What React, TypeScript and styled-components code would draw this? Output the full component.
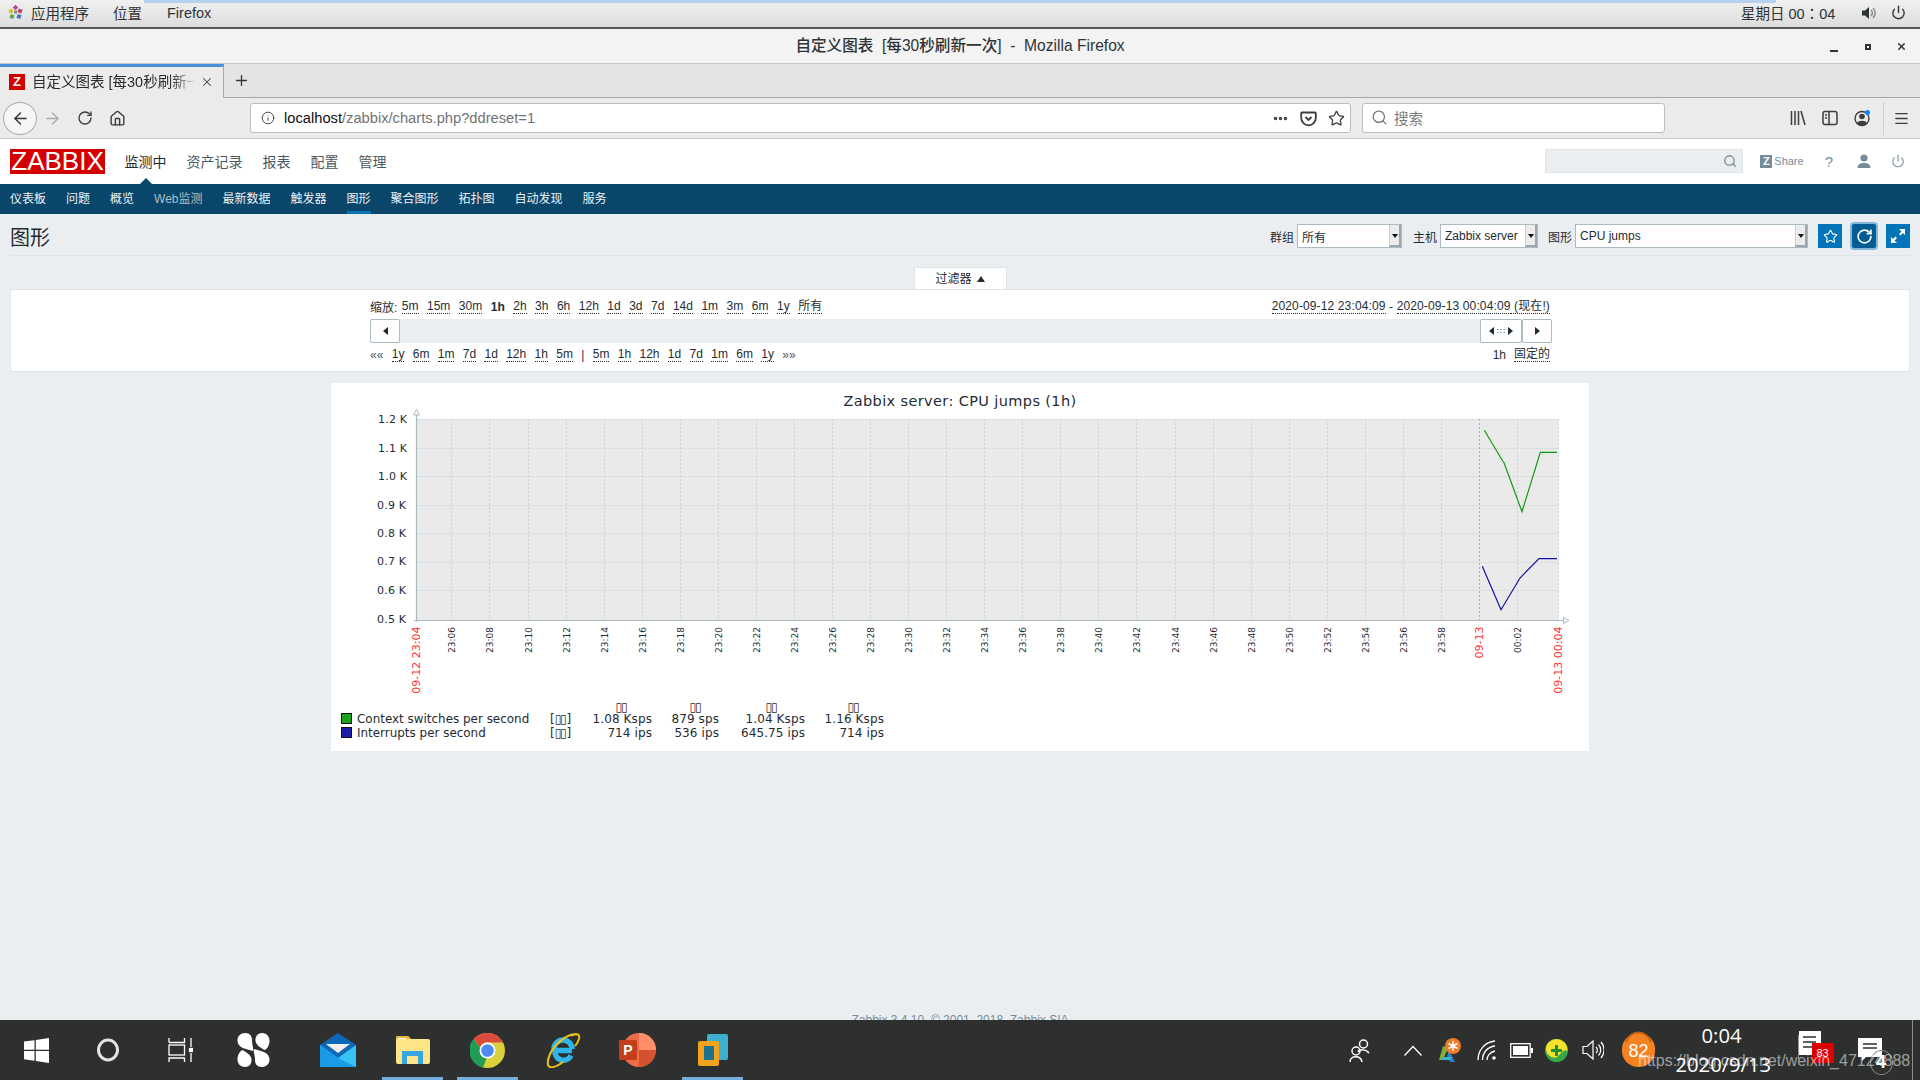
import React from 'react';
import styled, { createGlobalStyle } from 'styled-components';
import { ArrowLeft, ArrowRight, RotateCw, House, Info, Star, Search, Menu, Power, X, Plus, Ellipsis } from 'lucide-react';

const SANS = `"Liberation Sans", "Noto Sans CJK SC", sans-serif`;
const CHART = `"DejaVu Sans", "Noto Sans CJK SC", sans-serif`;

const Global = createGlobalStyle`
  html, body { margin: 0; padding: 0; background: #ebeef0; }
  * { box-sizing: border-box; }
`;

const Screen = styled.div`
  width: 1920px; height: 1080px; overflow: hidden; position: relative;
  display: flex; flex-direction: column; font-family: ${SANS}; color: #1f2c33; background: #ebeef0;
`;

/* GNOME panel */
const GnomeBar = styled.div`
  height: 29px; flex: none; position: relative; display: flex; align-items: center; padding: 0 14px 3px 8px;
  background: linear-gradient(#f0f0f0, #dcdcdc); border-bottom: 1px solid #5a5a5a; box-shadow: inset 0 -1px 0 #5a5a5a;
  font-size: 14.5px; color: #2e3436;
`;
const ActivityStrip = styled.div`
  position: absolute; left: 144px; top: 0; width: 1632px; height: 3px; background: #b7d0ee;
`;
const GnomeItem = styled.span<{ $ml: number }>`
  margin-left: ${p => p.$ml}px;
`;
const GnomeRight = styled.div`
  margin-left: auto; display: flex; align-items: center;
`;
const GnomeClock = styled.span`
  width: 120px; font-family: "Liberation Sans", "Noto Sans CJK TC", sans-serif; font-size: 14.5px; white-space: pre;
`;
const PanelPower = styled.span`
  display: flex; margin-left: 14px;
`;

/* Window title */
const TitleBar = styled.div`
  height: 35px; flex: none; position: relative; display: flex; align-items: center; justify-content: center; padding-bottom: 5px;
  background: #f3f3f3; border-bottom: 1px solid #c6c6c6; font-size: 15.6px; font-weight: 500; color: #2e3436; white-space: pre;
`;
const WinControls = styled.div`
  position: absolute; right: 13px; top: 12px; display: flex; align-items: center; gap: 0;
`;
const WinMin = styled.span`
  width: 8px; height: 2px; background: #2e3436; margin-top: 9px;
`;
const WinMax = styled.span`
  width: 6px; height: 6px; border: 2px solid #2e3436; margin-left: 27px;
`;
const WinClose = styled.span`
  display: flex; margin-left: 25px;
`;

/* Tabs */
const TabStrip = styled.div`
  height: 34px; flex: none; display: flex; background: #e4e4e3; border-bottom: 1px solid #a8a8a8;
`;
const Tab = styled.div`
  width: 224px; height: 34px; background: #ebebea; border-top: 3px solid #4a90d9; border-right: 1px solid #a8a8a8;
  display: flex; align-items: center; padding: 0 0 1px 9px; font-size: 14.5px; color: #2b2b2b;
`;
const Favicon = styled.span`
  width: 16px; height: 16px; flex: none; background: #d40000; color: #fff; font: bold 13px/16px ${SANS}; text-align: center;
`;
const TabLabel = styled.span`
  margin: -3px 0 0 7px; width: 164px; overflow: hidden; white-space: nowrap;
  -webkit-mask-image: linear-gradient(90deg, #000 85%, transparent);
  mask-image: linear-gradient(90deg, #000 85%, transparent);
`;
const TabClose = styled.span`
  display: flex; margin-left: 4px; color: #444;
`;
const NewTab = styled.span`
  display: flex; margin: 8px 0 0 9px; height: 16px; color: #333;
`;

/* Nav toolbar */
const NavBar = styled.div`
  height: 41px; flex: none; display: flex; align-items: center; background: #ebebea; border-bottom: 1px solid #c8c8c8; padding-left: 3px; color: #3d3d3d;
`;
const BackBtn = styled.span`
  width: 34px; height: 33px; flex: none; border-radius: 50%; border: 1px solid #a9a9a9; background: #f6f6f6;
  display: flex; align-items: center; justify-content: center; color: #333;
`;
const NavIcon = styled.span<{ $ml: number; $c?: string }>`
  display: flex; margin-left: ${p => p.$ml}px; color: ${p => p.$c || '#3d3d3d'};
`;
const UrlBox = styled.div`
  width: 1101px; height: 30px; margin-left: 124px; flex: none; background: #fff; border: 1px solid #bdbdbd; border-radius: 3px;
  display: flex; align-items: center; padding-left: 10px; font-size: 14.7px; color: #737373;
`;
const UrlText = styled.span`
  margin-left: 9px;
`;
const UrlHost = styled.span`
  color: #111;
`;
const UrlActions = styled.span`
  margin-left: auto; display: flex; align-items: center; padding-right: 5px; color: #3d3d3d;
`;
const SearchBox = styled.div`
  width: 303px; height: 30px; margin-left: 11px; flex: none; background: #fff; border: 1px solid #bdbdbd; border-radius: 3px;
  display: flex; align-items: center; padding: 0 0 2px 8px; font-size: 14.5px; color: #7a7a7a; gap: 6px;
`;
const Separator = styled.span`
  width: 1px; height: 33px; background: #cfcfcf; margin-left: 11px;
`;

/* Zabbix header */
const ZHeader = styled.div`
  height: 45px; flex: none; background: #fff; display: flex; align-items: center; padding-left: 10px;
`;
const Logo = styled.div`
  width: 95px; height: 25px; background: #d40000; color: #fff; font-size: 26px; line-height: 25px; text-align: center;
`;
const MainMenu = styled.nav`
  display: flex; gap: 20px; margin: -2px 0 0 19.5px; font-size: 14px; color: #4a5a63;
`;
const MainItem = styled.span<{ $active?: boolean }>`
  position: relative; color: ${p => (p.$active ? '#1f2c33' : '#4a5a63')};
  ${p => p.$active && `&::after { content: ''; position: absolute; left: 14px; top: 27px; border: 7px solid transparent; border-top: 0; border-bottom-color: #0a466a; }`}
`;
const ZHeaderRight = styled.div`
  margin-left: auto; display: flex; align-items: center; color: #768d99; padding-bottom: 1px;
`;
const ZSearch = styled.div`
  width: 198px; height: 24px; background: #ebeef0; border: 1px solid #dfe4e7; display: flex; align-items: center; justify-content: flex-end; padding-right: 5px;
`;
const ShareLink = styled.span`
  display: flex; align-items: center; margin-left: 17px; font-size: 11px; gap: 2px;
`;
const ZBadge = styled.span`
  width: 12px; height: 13px; background: #768d99; color: #fff; font: bold 11px/13px ${SANS}; text-align: center;
`;
const ZIconSlot = styled.span<{ $ml: number }>`
  display: flex; margin-left: ${p => p.$ml}px; font-size: 15px; color: #768d99;
`;

/* Sub nav */
const SubNav = styled.nav`
  height: 30px; flex: none; background: #0a466a; display: flex; gap: 20px; padding-left: 10px; font-size: 12px; color: #f2f2f2;
`;
const SubItem = styled.span<{ $active?: boolean; $dim?: boolean }>`
  line-height: 30px; white-space: nowrap; color: ${p => (p.$dim ? '#a9c0cd' : '#eef2f4')};
  ${p => p.$active && `box-shadow: inset 0 -3px 0 #0275b8;`}
`;

/* Content */
const Content = styled.main`
  flex: 1; min-height: 0; overflow: hidden; display: flex; flex-direction: column; align-items: stretch;
`;
const TitleRow = styled.div`
  height: 42px; flex: none; margin: 0 10px; border-bottom: 1px solid #dfe4e7; display: flex; align-items: center; padding-top: 3px;
`;
const PageTitle = styled.h1`
  margin: 0; font-size: 20px; font-weight: normal; color: #1f2c33;
`;
const Controls = styled.div`
  margin-left: auto; display: flex; align-items: center; font-size: 12px;
`;
const CtlLabel = styled.span<{ $ml: number }>`
  margin-left: ${p => p.$ml}px; margin-right: 3px;
`;
const SelectBox = styled.div<{ $w: number }>`
  width: ${p => p.$w}px; height: 24px; background: #fff; border: 1px solid #acbbc2; display: flex; align-items: center; padding-left: 4px; font-size: 12px; position: relative;
`;
const SelectArrow = styled.span`
  position: absolute; right: 0; top: 0; bottom: 0; width: 12px; background: #ececec; border-right: 2px solid #9aa7ae; border-bottom: 2px solid #9aa7ae; border-left: 1px solid #d0d0d0;
  &::after { content: ''; position: absolute; left: 2px; top: 9px; border: 3.5px solid transparent; border-bottom: 0; border-top: 4px solid #111; }
`;
const IconBtn = styled.span<{ $ml: number; $focus?: boolean }>`
  width: 24px; height: 24px; margin-left: ${p => p.$ml}px; display: flex; align-items: center; justify-content: center; color: #fff;
  background: ${p => (p.$focus ? '#005c93' : '#0275b8')};
  ${p => p.$focus && `box-shadow: 0 0 0 2px #83b8d8; border-radius: 2px;`}
`;

const FilterTabRow = styled.div`
  flex: none; display: flex; justify-content: center; margin-top: 11px; height: 23px;
`;
const FilterTab = styled.div`
  width: 93px; background: #fff; font-size: 12px; display: flex; align-items: center; justify-content: center; gap: 5px; padding-bottom: 3px; border: 1px solid #dfe4e7; border-bottom: 0;
`;
const Up = styled.span`
  border: 4px solid transparent; border-top: 0; border-bottom: 6px solid #1f2c33; margin-top: 2px;
`;
const FilterBox = styled.section`
  flex: none; height: 83px; margin: -1px 10px 0 10px; background: #fff; border: 1px solid #dfe4e7; padding: 9px 0 0 2px; display: flex; flex-direction: column; align-items: center;
`;
const Period = styled.div`
  width: 1182px; display: flex; flex-direction: column;
`;
const PeriodRow = styled.div<{ $mt?: number }>`
  display: flex; justify-content: space-between; align-items: center; height: 15px; font-size: 12px; margin-top: ${p => p.$mt || 0}px; padding-right: 2px; color: #1f2c33;
`;
const LinkGroup = styled.div<{ $gap: number }>`
  display: flex; gap: ${p => p.$gap}px; align-items: center; white-space: nowrap;
`;
const Plain = styled.span<{ $c?: string }>`
  color: ${p => p.$c || '#1f2c33'}; white-space: pre;
`;
const ZoomLabel = styled.span`
  white-space: pre; margin-right: -4px;
`;
const Lnk = styled.span<{ $bold?: boolean }>`
  border-bottom: 1px dotted #1f2c33; line-height: 14px; white-space: pre; font-weight: ${p => (p.$bold ? 'bold' : 'normal')};
  ${p => p.$bold && `border-bottom: 0;`}
`;
const DateGroup = styled.div`
  display: flex; align-items: center; white-space: pre; letter-spacing: .13px;
`;
const Track = styled.div`
  height: 24px; margin-top: 5px; background: #ebeef0; display: flex; justify-content: space-between;
`;
const TrackEnd = styled.div`
  display: flex;
`;
const SlideBtn = styled.span<{ $w: number }>`
  width: ${p => p.$w}px; height: 24px; background: #fff; border: 1px solid #acbbc2; border-radius: 2px; display: flex; align-items: center; justify-content: center; gap: 2px;
`;
const TriL = styled.span`
  border: 4px solid transparent; border-left: 0; border-right: 5px solid #1f2c33;
`;
const TriR = styled.span`
  border: 4px solid transparent; border-right: 0; border-left: 5px solid #1f2c33;
`;
const Grip = styled.span`
  width: 10px; height: 6px; background-image: radial-gradient(#8a9aa3 0.8px, transparent 1px); background-size: 3.4px 3px;
`;

const ChartCard = styled.div`
  flex: none; width: 1258px; height: 368px; margin: 11px 0 0 331px; background: #fff;
`;
const ChartSvg = styled.svg`
  display: block; width: 1258px; height: 368px; font-family: ${CHART};
`;
const Footer = styled.footer`
  margin-top: auto; margin-bottom: -8px; height: 15px; flex: none; text-align: center; font-size: 12px; color: #768d99;
`;

/* Task bar */
const TaskBar = styled.footer`
  height: 60px; flex: none; background: #2e2f2f; display: flex; align-items: stretch; position: relative; color: #fff;
`;
const Slot = styled.div<{ $w: number; $on?: boolean }>`
  width: ${p => p.$w}px; flex: none; display: flex; align-items: center; justify-content: center; position: relative;
  ${p => p.$on && `box-shadow: inset 0 -3px 0 #76aee0;`}
`;
const AppGroup = styled.div`
  display: flex; gap: 14px; margin-left: 16px;
`;
const Tray = styled.div`
  position: absolute; inset: 0 0 0 auto; display: flex; align-items: center;
`;
const TrayIcon = styled.span<{ $ml: number }>`
  display: flex; margin-left: ${p => p.$ml}px; position: relative;
`;
const Clock = styled.div`
  width: 92px; margin-left: 21px; text-align: center; font-size: 20.2px; line-height: 29px; color: #fff; font-family: "Open Sans", ${SANS}; white-space: nowrap;
`;
const RedBadge = styled.span`
  position: absolute; left: 14px; top: 12px; width: 22px; height: 20px; background: #d00; color: #fff; font-size: 11px; line-height: 20px; text-align: center;
`;
const CountRing = styled.span`
  position: absolute; left: 12px; top: 12px; width: 23px; height: 25px; border: 1px solid #8a8a8a; border-radius: 50%; font-size: 18px; font-weight: bold; line-height: 23px; text-align: center; color: #fff;
`;
const DesktopEdge = styled.span`
  width: 1px; height: 60px; background: #8b8b8b; margin: 0 7px 0 30.5px;
`;
const Watermark = styled.span`
  position: absolute; left: 1638px; top: 30px; font-size: 16px; line-height: 22px; color: rgba(255,255,255,.55); white-space: nowrap;
`;

/* Small drawings */
const GnomeLogo = () => (
  <svg width="15" height="15" viewBox="0 0 15 15">
    <rect x="5.5" y="0.5" width="4" height="4" fill="#b04fa0" transform="rotate(45 7.5 2.5)" />
    <rect x="1" y="4" width="4" height="4" fill="#c9c53c" transform="rotate(20 3 6)" />
    <rect x="10" y="4" width="4" height="4" fill="#c0436a" transform="rotate(20 12 6)" />
    <rect x="2" y="9.5" width="4" height="4" fill="#5ea84a" transform="rotate(20 4 11.5)" />
    <rect x="9" y="9.5" width="4" height="4" fill="#4a6fc0" transform="rotate(20 11 11.5)" />
    <rect x="6" y="5.5" width="3" height="3" fill="#888" />
  </svg>
);
const Speaker = () => (
  <svg width="16" height="16" viewBox="0 0 16 16"><path d="M1 5.5h3L8 2v12L4 10.5H1z" fill="#2e3436" /><path d="M10 5a4 4 0 0 1 0 6M12 3a7 7 0 0 1 0 10" stroke="#888" strokeWidth="1.5" fill="none" /></svg>
);
const Pocket = () => (
  <svg width="17" height="17" viewBox="0 0 17 17" fill="none" stroke="#3d3d3d" strokeWidth="1.8"><path d="M2 2.5h13a.8.8 0 0 1 .8.8V8a7.3 7.3 0 0 1-14.6 0V3.3a.8.8 0 0 1 .8-.8z" /><path d="M5.5 7l3 3 3-3" /></svg>
);
const LibraryIcon = () => (
  <svg width="16" height="16" viewBox="0 0 16 16" stroke="#3d3d3d" strokeWidth="1.5" fill="none"><path d="M1.5 1v14M5 1v14M8.5 1v14M11 1l4 14" /></svg>
);
const SidebarIcon = () => (
  <svg width="16" height="16" viewBox="0 0 16 16" stroke="#3d3d3d" strokeWidth="1.5" fill="none"><rect x="1" y="1.5" width="14" height="13" rx="2" /><path d="M7 1.5v13" /><path d="M3 5h2M3 8h2" /></svg>
);
const AccountIcon = () => (
  <svg width="18" height="18" viewBox="0 0 18 18"><circle cx="8" cy="9.5" r="7" fill="none" stroke="#3d3d3d" strokeWidth="1.4" /><circle cx="8" cy="7.5" r="2.8" fill="#3d3d3d" /><path d="M3 14c1-3 9-3 10 0l-2 2H5z" fill="#3d3d3d" /><circle cx="13.5" cy="3.5" r="2.5" fill="#0a84ff" /></svg>
);
const ZUser = () => (
  <svg width="14" height="15" viewBox="0 0 14 15" fill="#768d99"><circle cx="7" cy="4" r="3.6" /><path d="M0.5 14c0-4 3-5 6.5-5s6.5 1 6.5 5z" /></svg>
);
const StarOutline = () => <Star size={15} strokeWidth={1.8} color="#fff" />;
const Refresh = () => <RotateCw size={17} strokeWidth={2.4} color="#fff" />;
const Expand = () => (
  <svg width="16" height="16" viewBox="0 0 16 16" fill="#fff"><path d="M9 1h6v6l-2-2-2.5 2.5-1.5-1.5L11.5 3.5z" /><path d="M7 15H1V9l2 2 2.5-2.5L7 10l-2.5 2.5z" /></svg>
);

const WinLogo = () => (
  <svg width="25" height="25" viewBox="0 0 25 25" fill="#fff"><path d="M0 3.6l10.5-1.4v9.6H0zM11.8 2L25 0v11.8H11.8zM0 13h10.5v9.7L0 21.3zM11.8 13H25v12l-13.2-1.9z" /></svg>
);
const Cortana = () => (
  <svg width="24" height="24" viewBox="0 0 24 24"><ellipse cx="12" cy="12" rx="9.5" ry="10" fill="none" stroke="#e4e4e4" strokeWidth="3" /></svg>
);
const TaskView = () => (
  <svg width="25" height="24" viewBox="0 0 25 24" fill="none" stroke="#fff" strokeWidth="1.3"><path d="M1 4.5h15.5V0M1 4.5V0M16.5 24v-4H1v4" /><rect x="1" y="7" width="15.5" height="10" /><path d="M23 0v9M23 15v9" /><rect x="21.5" y="10.5" width="3" height="3" fill="#fff" /></svg>
);
const Swirl = () => (
  <svg width="33" height="34" viewBox="0 0 33 34" fill="#fff">
    <path d="M8 0c5 0 7 3 7 7 0 5 2 9 1 11C9 16 1 15 .5 8 0 3 4 0 8 0z" />
    <path d="M25 0c5 0 8 4 7.5 9-.5 4-2.5 7-5 8-3-2-8-4-9-9C18 3 21 0 25 0z" />
    <path d="M5.5 17c3 2 8 4 9 9 .5 5-2.5 8-6.5 8-5 0-8-4-7.5-9 .5-4 2.5-7 5-8z" />
    <path d="M17 16c7 2 15 3 15.5 10 .5 5-3.5 8-7.5 8-5 0-7-3-7-7 0-5-2-9-1-11z" />
  </svg>
);
const Mail = () => (
  <svg width="36" height="34" viewBox="0 0 36 34"><path d="M0 12L18 0l18 12v22H0z" fill="#0f67b8" /><path d="M6 11h24l-12 9z" fill="#f1f1f1" /><path d="M0 12l18 13 18-13v22H0z" fill="#36c2f3" /><path d="M0 34V12l18 13 18 9z" fill="#1a9be6" /></svg>
);
const Folder = () => (
  <svg width="34" height="28" viewBox="0 0 34 28"><path d="M0 2a2 2 0 0 1 2-2h10l3 3h17a2 2 0 0 1 2 2v21a2 2 0 0 1-2 2H2a2 2 0 0 1-2-2z" fill="#ffe58a" /><path d="M0 2a2 2 0 0 1 2-2h10l3 3H0z" fill="#e8b73a" /><rect x="2" y="2" width="8" height="1" fill="#fff" /><path d="M6 28V15h21v13h-5v-8H11v8z" fill="#37a6e0" /></svg>
);
const Chrome = () => (
  <svg width="35" height="35" viewBox="0 0 35 35"><circle cx="17.5" cy="17.5" r="17.5" fill="#d9d03a" /><path d="M17.5 0A17.5 17.5 0 0 1 33 9.5H17.5a8 8 0 0 0-7.5 5L3.5 6A17.5 17.5 0 0 1 17.5 0z" fill="#db4a3d" /><path d="M3.5 6l7 9.5a8 8 0 0 0 6 10L13 34.5A17.5 17.5 0 0 1 3.5 6z" fill="#1f9d55" /><circle cx="17.5" cy="17.5" r="8" fill="#fff" /><circle cx="17.5" cy="17.5" r="6.3" fill="#4b8bf0" /></svg>
);
const IE = () => (
  <svg width="36" height="36" viewBox="0 0 36 36" fill="none"><path d="M27 18.5H10a8.5 8.5 0 0 0 16 5" stroke="#2fb5e8" strokeWidth="5.5" /><path d="M9 17a9 9 0 0 1 18 0" stroke="#2fb5e8" strokeWidth="5.5" /><path d="M32 3C27 0 12 8 5 22c-3 7-3 12 0 13 4 1 9-2 13-5M26 4c5-3 9-3 8 3-1 3-2 5-4 7" stroke="#eac11c" strokeWidth="2" /></svg>
);
const Ppt = () => (
  <svg width="37" height="36" viewBox="0 0 37 36"><circle cx="20" cy="18" r="17" fill="#ed6c47" /><path d="M20 1a17 17 0 0 1 17 17H20z" fill="#ff8f6b" /><path d="M20 18h17a17 17 0 0 1-17 17z" fill="#d35230" /><rect x="0" y="8" width="18" height="20" rx="1" fill="#c43e1c" /><text x="9" y="23" textAnchor="middle" fontSize="14" fontWeight="bold" fill="#fff" fontFamily={SANS}>P</text></svg>
);
const VMware = () => (
  <svg width="32" height="34" viewBox="0 0 32 34"><rect x="10" y="1" width="21" height="26" rx="2" fill="#3eafd0" /><rect x="1" y="8" width="21" height="25" rx="2" fill="#f2a31e" /><rect x="7" y="13" width="10" height="14" fill="#1f6f8f" /></svg>
);
const People = () => (
  <svg width="21" height="24" viewBox="0 0 21 24" fill="none" stroke="#fff" strokeWidth="1.5"><circle cx="14.5" cy="6" r="4" /><path d="M9 14c1-3 8-3 11 1" /><circle cx="7" cy="13" r="4" /><path d="M1 24c0-7 11-7 12 0" /></svg>
);
const Caret = () => (
  <svg width="18" height="11" viewBox="0 0 18 11" fill="none" stroke="#fff" strokeWidth="1.3"><path d="M.5 10.5L9 1.5l8.5 9" /></svg>
);
const ColorTray = () => (
  <svg width="22" height="24" viewBox="0 0 22 24"><path d="M4 8l5 2-5 12H0z" fill="#7fb03a" /><path d="M10 12l6 12h-5l-3-6z" fill="#2d7fd0" /><path d="M2 22h9l2-3H4z" fill="#35b8c8" /><circle cx="14" cy="8" r="8" fill="#ef7b2b" /><path d="M14 3v10M9.5 5.5l9 5M18.5 5.5l-9 5" stroke="#fff" strokeWidth="1.5" /></svg>
);
const WifiTray = () => (
  <svg width="19" height="20" viewBox="0 0 19 20" fill="none" stroke="#fff" strokeWidth="1.3"><path d="M1 20C1 10 8 2 18 1" /><path d="M5.5 20C5.5 13 10 7 18 6" /><path d="M10 20c0-4 3-8 8-9" /><circle cx="17" cy="18" r="1.8" fill="#fff" stroke="none" /></svg>
);
const Battery = () => (
  <svg width="23" height="15" viewBox="0 0 23 15"><rect x=".7" y=".7" width="19.5" height="13.6" fill="none" stroke="#fff" strokeWidth="1.3" /><rect x="3" y="3" width="15" height="9" fill="#fff" /><rect x="21" y="5" width="2" height="5" fill="#fff" /></svg>
);
const GreenTray = () => (
  <svg width="23" height="23" viewBox="0 0 23 23"><circle cx="11.5" cy="11.5" r="11.5" fill="#35a84a" /><path d="M4 3a11 11 0 0 1 15 0c3 3 4 7 3 9-3-3-6 3-10 6-4 2-8-1-10-4C0 10 1 6 4 3z" fill="#f7e22b" /><path d="M11.5 6v11M6 11.5h11" stroke="#18913a" strokeWidth="3" /></svg>
);
const VolumeTray = () => (
  <svg width="22" height="20" viewBox="0 0 22 20" fill="none" stroke="#fff" strokeWidth="1.2"><path d="M1 6.5h4L11 1v18l-6-5.500H1z" /><path d="M14 7a4 4 0 0 1 0 6M16.5 4.500a8 8 0 0 1 0 11M19 2a12 12 0 0 1 0 16" /></svg>
);
const OrangeBadge = () => (
  <svg width="33" height="38" viewBox="0 0 33 38"><rect x="0" y="2" width="33" height="34" rx="16" fill="#f58220" /><path d="M4 11a13 13 0 0 1 25 0" fill="none" stroke="#c56010" strokeWidth="2" /><text x="16.5" y="26" textAnchor="middle" fontSize="18" fill="#fff" fontFamily={SANS}>82</text></svg>
);
const DocIcon = () => (
  <svg width="23" height="38" viewBox="0 0 23 38"><rect x="1" y="0" width="22" height="24" fill="#fff" /><path d="M0 4v24" stroke="#fff" /><path d="M5 6h13M5 11h13M5 16h9" stroke="#2e2f2f" strokeWidth="1.5" /></svg>
);
const ActionIcon = () => (
  <svg width="24" height="24" viewBox="0 0 24 24"><path d="M0 0h24v19H8l-4 4v-4H0z" fill="#fff" /><path d="M5 6h14M5 10h14" stroke="#2e2f2f" strokeWidth="1.3" /></svg>
);

/* Chart data */
const PX = 416.5, PY0 = 419, PY1 = 620, PR = 1558.5;
const hLines = [419, 448, 476, 505, 533, 562, 590];
const yLabels = [
  ['1.2 K', 378, 418.5], ['1.1 K', 378, 447.5], ['1.0 K', 378, 476], ['0.9 K', 377, 504.5],
  ['0.8 K', 377, 533], ['0.7 K', 377, 561], ['0.6 K', 377, 590], ['0.5 K', 377, 619],
] as const;
const minuteLabels: { t: string; x: number }[] = [];
for (let m = 6; m <= 58; m += 2) {
  minuteLabels.push({ t: `23:${String(m).padStart(2, '0')}`, x: Math.floor(416.7 + (m - 4.15) * 19.03) + 0.5 });
}
const legendRows = [
  { name: 'Context switches per second', color: '#1aa31a', y: 713, vals: ['1.08 Ksps', '879 sps', '1.04 Ksps', '1.16 Ksps'] },
  { name: 'Interrupts per second', color: '#1c1ca6', y: 727, vals: ['714 ips', '536 ips', '645.75 ips', '714 ips'] },
];
const colRight = [652, 719, 805, 884];
const headers = [621, 695, 771, 853];

const Graph = () => (
  <ChartSvg viewBox="331 383 1258 368">
    <text x="960" y="406" textAnchor="middle" fontSize="14.5" fill="#1f2c33" letterSpacing=".38">Zabbix server: CPU jumps (1h)</text>
    <rect x={PX} y={PY0} width={PR - PX} height={PY1 - PY0} fill="#eaeaea" />
    {hLines.map(y => <line key={y} x1={PX} x2={PR} y1={y + 0.5} y2={y + 0.5} stroke="#c9d3da" strokeDasharray="2 2" />)}
    {minuteLabels.map(l => <line key={l.t} x1={l.x} x2={l.x} y1={PY0} y2={PY1} stroke="#c9d3da" strokeDasharray="2 2" />)}
    <line x1="1479.5" x2="1479.5" y1={PY0} y2={PY1} stroke="#a9b4ba" strokeDasharray="2 2" />
    <line x1="1517.5" x2="1517.5" y1={PY0} y2={PY1} stroke="#c9d3da" strokeDasharray="2 2" />
    <line x1={PR} x2={PR} y1={PY0} y2={PY1} stroke="#c9d3da" strokeDasharray="2 2" />
    <line x1={PX} x2={PX} y1="412" y2="622" stroke="#acbbc2" strokeWidth="1.2" />
    <line x1="414" x2="1563" y1="620.5" y2="620.5" stroke="#acbbc2" strokeWidth="1.2" />
    <path d="M416.5 409.5l3 5.5h-6z" fill="#fff" stroke="#acbbc2" />
    <path d="M1569 620.5l-5.5 3v-6z" fill="#fff" stroke="#acbbc2" />
    <polyline points="1484.3,430.3 1502.7,461 1504,462.7 1522,511.7 1540.3,452.3 1557,452.3" fill="none" stroke="#0f9a0f" strokeWidth="1.2" />
    <polyline points="1482.3,566.3 1501,609.7 1520,578 1539,558.7 1557,558.7" fill="none" stroke="#1212a0" strokeWidth="1.2" />
    {yLabels.map(([t, x, y]) => <text key={t} x={x} y={y + 4} fontSize="11" letterSpacing=".2" fill="#1f2c33">{t}</text>)}
    {minuteLabels.map(l => (
      <text key={l.t} x={l.x + 3.5} y="627" fontSize="9" fill="#1f2c33" textAnchor="end" transform={`rotate(-90 ${l.x + 3.5} 627)`}>{l.t}</text>
    ))}
    <text x="1521" y="627" fontSize="9" fill="#1f2c33" textAnchor="end" transform="rotate(-90 1521 627)">00:02</text>
    <text x="420" y="626.5" fontSize="11" fill="#f33" textAnchor="end" transform="rotate(-90 420 626.5)">09-12 23:04</text>
    <text x="1483" y="626.5" fontSize="11" fill="#f33" textAnchor="end" transform="rotate(-90 1483 626.5)">09-13</text>
    <text x="1561.5" y="626.5" fontSize="11" fill="#f33" textAnchor="end" transform="rotate(-90 1561.5 626.5)">09-13 00:04</text>
    {headers.map(x => <text key={x} x={x} y="710.5" fontSize="12" fill="#1f2c33" textAnchor="middle" letterSpacing="-1.2">▯▯</text>)}
    {legendRows.map(r => (
      <g key={r.name}>
        <rect x="341.5" y={r.y + 0.5} width="10" height="10" fill={r.color} stroke="#111" />
        <text x="357" y={r.y + 10} fontSize="11.95" fill="#1f2c33">{r.name}</text>
        <text x="550" y={r.y + 10} fontSize="12" fill="#1f2c33">[<tspan letterSpacing="-1.2">▯▯</tspan><tspan dx="1">]</tspan></text>
        {r.vals.map((v, i) => <text key={i} x={colRight[i]} y={r.y + 10} fontSize="12" letterSpacing=".1" fill="#1f2c33" textAnchor="end">{v}</text>)}
      </g>
    ))}
  </ChartSvg>
);

const zoomLinks = ['5m', '15m', '30m', '1h', '2h', '3h', '6h', '12h', '1d', '3d', '7d', '14d', '1m', '3m', '6m', '1y', '所有'];
const backLinks = ['1y', '6m', '1m', '7d', '1d', '12h', '1h', '5m'];
const fwdLinks = ['5m', '1h', '12h', '1d', '7d', '1m', '6m', '1y'];
const subItems = ['仪表板', '问题', '概览', 'Web监测', '最新数据', '触发器', '图形', '聚合图形', '拓扑图', '自动发现', '服务'];

export default function App() {
  return (
    <Screen>
      <Global />
      <GnomeBar>
        <ActivityStrip />
        <GnomeLogo />
        <GnomeItem $ml={8}>应用程序</GnomeItem>
        <GnomeItem $ml={24}>位置</GnomeItem>
        <GnomeItem $ml={25}>Firefox</GnomeItem>
        <GnomeRight>
          <GnomeClock>星期日 00：04</GnomeClock>
          <Speaker />
          <PanelPower><Power size={15} strokeWidth={2.2} color="#2e3436" /></PanelPower>
        </GnomeRight>
      </GnomeBar>
      <TitleBar>
        自定义图表  [每30秒刷新一次]  -  Mozilla Firefox
        <WinControls>
          <WinMin />
          <WinMax />
          <WinClose><X size={11} strokeWidth={3.2} color="#2e3436" /></WinClose>
        </WinControls>
      </TitleBar>
      <TabStrip>
        <Tab>
          <Favicon>Z</Favicon>
          <TabLabel>自定义图表 [每30秒刷新一次]</TabLabel>
          <TabClose><X size={14} strokeWidth={1.8} /></TabClose>
        </Tab>
        <NewTab><Plus size={17} strokeWidth={1.8} /></NewTab>
      </TabStrip>
      <NavBar>
        <BackBtn><ArrowLeft size={19} strokeWidth={1.8} /></BackBtn>
        <NavIcon $ml={6} $c="#adadad"><ArrowRight size={19} strokeWidth={1.8} /></NavIcon>
        <NavIcon $ml={15}><RotateCw size={16} strokeWidth={2} /></NavIcon>
        <NavIcon $ml={16}><House size={17} strokeWidth={2} /></NavIcon>
        <UrlBox>
          <Info size={14} strokeWidth={1.6} color="#444" />
          <UrlText><UrlHost>localhost</UrlHost>/zabbix/charts.php?ddreset=1</UrlText>
          <UrlActions>
            <Ellipsis size={17} strokeWidth={3} />
            <NavIcon $ml={11}><Pocket /></NavIcon>
            <NavIcon $ml={11}><Star size={17} strokeWidth={1.8} /></NavIcon>
          </UrlActions>
        </UrlBox>
        <SearchBox><Search size={17} strokeWidth={1.8} color="#777" />搜索</SearchBox>
        <NavIcon $ml={125}><LibraryIcon /></NavIcon>
        <NavIcon $ml={16}><SidebarIcon /></NavIcon>
        <NavIcon $ml={16}><AccountIcon /></NavIcon>
        <Separator />
        <NavIcon $ml={9}><Menu size={17} strokeWidth={1.8} /></NavIcon>
      </NavBar>
      <ZHeader>
        <Logo>ZABBIX</Logo>
        <MainMenu>
          <MainItem $active>监测中</MainItem>
          <MainItem>资产记录</MainItem>
          <MainItem>报表</MainItem>
          <MainItem>配置</MainItem>
          <MainItem>管理</MainItem>
        </MainMenu>
        <ZHeaderRight>
          <ZSearch><Search size={14} strokeWidth={2.2} color="#768d99" /></ZSearch>
          <ShareLink><ZBadge>Z</ZBadge>Share</ShareLink>
          <ZIconSlot $ml={21}>?</ZIconSlot>
          <ZIconSlot $ml={24}><ZUser /></ZIconSlot>
          <ZIconSlot $ml={20}><Power size={14} strokeWidth={1.8} /></ZIconSlot>
          <ZIconSlot $ml={15} />
        </ZHeaderRight>
      </ZHeader>
      <SubNav>
        {subItems.map(s => <SubItem key={s} $active={s === '图形'} $dim={s === 'Web监测'}>{s}</SubItem>)}
      </SubNav>
      <Content>
        <TitleRow>
          <PageTitle>图形</PageTitle>
          <Controls>
            <CtlLabel $ml={0}>群组</CtlLabel>
            <SelectBox $w={105}>所有<SelectArrow /></SelectBox>
            <CtlLabel $ml={11}>主机</CtlLabel>
            <SelectBox $w={98}>Zabbix server<SelectArrow /></SelectBox>
            <CtlLabel $ml={10}>图形</CtlLabel>
            <SelectBox $w={233}>CPU jumps<SelectArrow /></SelectBox>
            <IconBtn $ml={10}><StarOutline /></IconBtn>
            <IconBtn $ml={10} $focus><Refresh /></IconBtn>
            <IconBtn $ml={10}><Expand /></IconBtn>
          </Controls>
        </TitleRow>
        <FilterTabRow>
          <FilterTab>过滤器 <Up /></FilterTab>
        </FilterTabRow>
        <FilterBox>
          <Period>
            <PeriodRow>
              <LinkGroup $gap={8.5}>
                <ZoomLabel>缩放:</ZoomLabel>
                {zoomLinks.map(l => <Lnk key={l} $bold={l === '1h'}>{l}</Lnk>)}
              </LinkGroup>
              <DateGroup>
                <Lnk>2020-09-12 23:04:09</Lnk><Plain> - </Plain><Lnk>2020-09-13 00:04:09</Lnk><Lnk> (现在!)</Lnk>
              </DateGroup>
            </PeriodRow>
            <Track>
              <SlideBtn $w={30}><TriL /></SlideBtn>
              <TrackEnd>
                <SlideBtn $w={42}><TriL /><Grip /><TriR /></SlideBtn>
                <SlideBtn $w={30}><TriR /></SlideBtn>
              </TrackEnd>
            </Track>
            <PeriodRow $mt={4}>
              <LinkGroup $gap={8.35}>
                <Plain $c="#4a5a63">««</Plain>
                {backLinks.map((l, i) => <Lnk key={i}>{l}</Lnk>)}
                <Plain>|</Plain>
                {fwdLinks.map((l, i) => <Lnk key={i}>{l}</Lnk>)}
                <Plain $c="#4a5a63">»»</Plain>
              </LinkGroup>
              <LinkGroup $gap={8}>
                <Plain>1h</Plain>
                <Lnk>固定的</Lnk>
              </LinkGroup>
            </PeriodRow>
          </Period>
        </FilterBox>
        <ChartCard><Graph /></ChartCard>
        <Footer>Zabbix 3.4.10. © 2001–2018, Zabbix SIA</Footer>
      </Content>
      <TaskBar>
        <Slot $w={72}><WinLogo /></Slot>
        <Slot $w={72}><Cortana /></Slot>
        <Slot $w={72}><TaskView /></Slot>
        <Slot $w={75}><Swirl /></Slot>
        <AppGroup>
          <Slot $w={61}><Mail /></Slot>
          <Slot $w={61} $on><Folder /></Slot>
          <Slot $w={61} $on><Chrome /></Slot>
          <Slot $w={61}><IE /></Slot>
          <Slot $w={61}><Ppt /></Slot>
          <Slot $w={61} $on><VMware /></Slot>
        </AppGroup>
        <Tray>
          <TrayIcon $ml={0}><People /></TrayIcon>
          <TrayIcon $ml={34}><Caret /></TrayIcon>
          <TrayIcon $ml={17}><ColorTray /></TrayIcon>
          <TrayIcon $ml={16}><WifiTray /></TrayIcon>
          <TrayIcon $ml={14}><Battery /></TrayIcon>
          <TrayIcon $ml={12}><GreenTray /></TrayIcon>
          <TrayIcon $ml={14}><VolumeTray /></TrayIcon>
          <TrayIcon $ml={18}><OrangeBadge /></TrayIcon>
          <Clock>0:04<br />2020/9/13</Clock>
          <TrayIcon $ml={30}><DocIcon /><RedBadge>83</RedBadge></TrayIcon>
          <TrayIcon $ml={37}><ActionIcon /><CountRing>4</CountRing></TrayIcon>
          <DesktopEdge />
        </Tray>
        <Watermark>https://blog.csdn.net/weixin_47124888</Watermark>
      </TaskBar>
    </Screen>
  );
}
